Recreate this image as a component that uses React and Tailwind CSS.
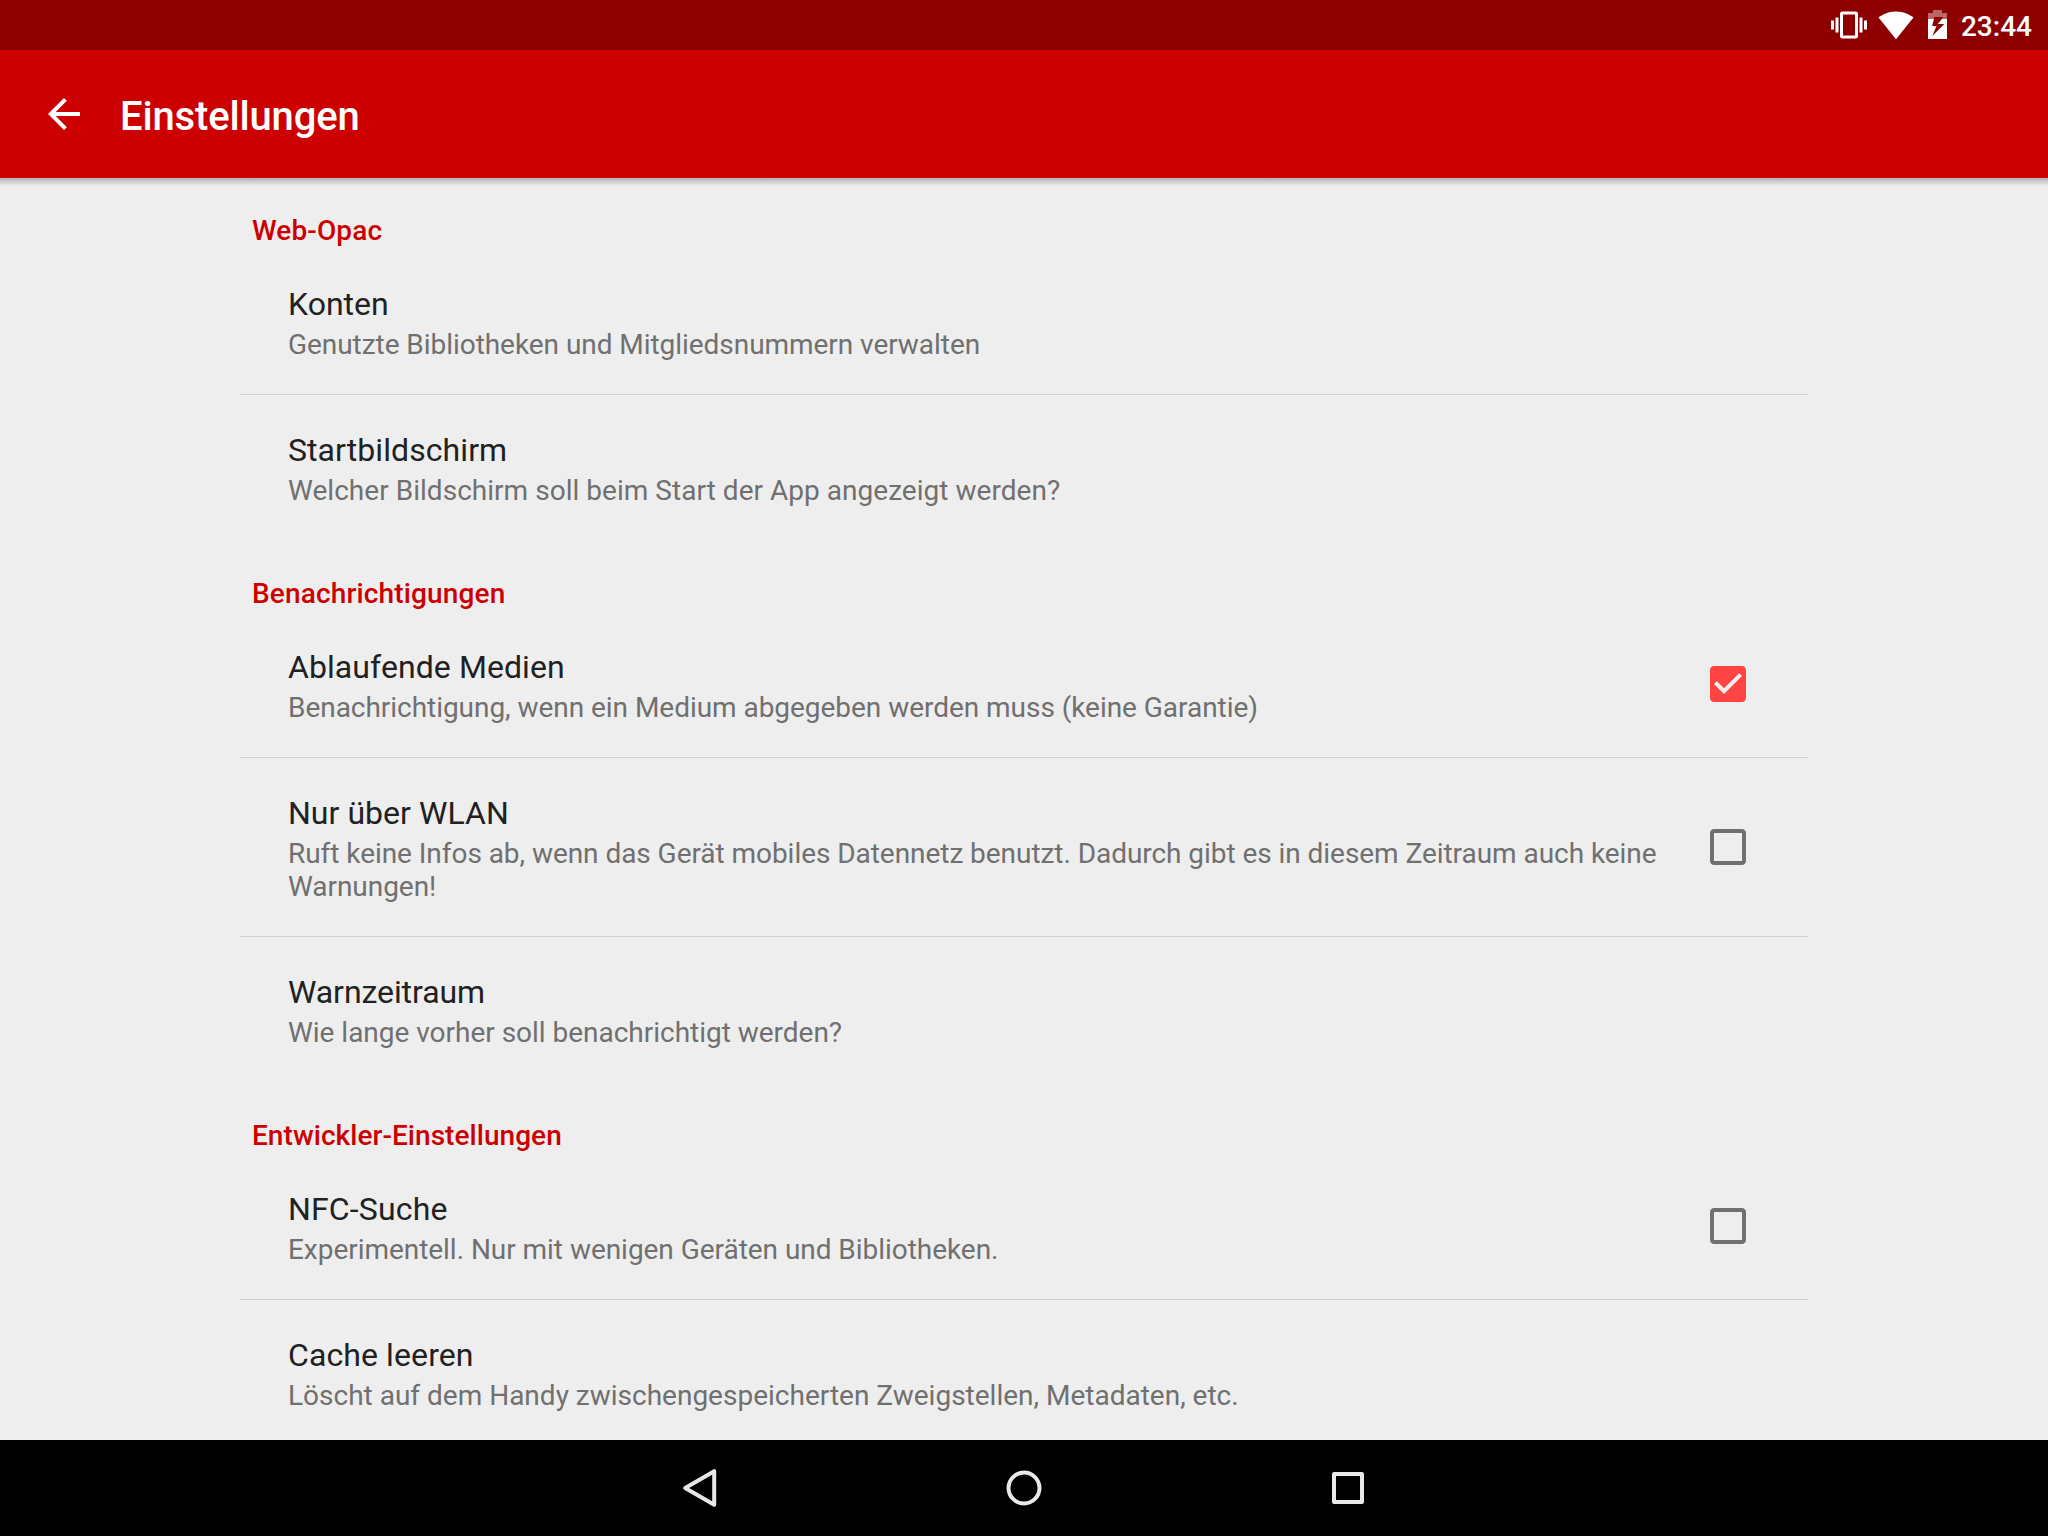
const sections = [
  {
    title: 'Web-Opac',
    tracking: 'tracking-[0.12px]',
    items: [
      {
        title: 'Konten',
        summary: 'Genutzte Bibliotheken und Mitgliedsnummern verwalten',
        summaryTracking: 'tracking-[-0.05px]',
      },
      {
        title: 'Startbildschirm',
        titleTracking: 'tracking-[0.07px]',
        summary: 'Welcher Bildschirm soll beim Start der App angezeigt werden?',
        summaryTracking: 'tracking-[0.03px]',
      },
    ],
  },
  {
    title: 'Benachrichtigungen',
    tracking: 'tracking-[0.15px]',
    items: [
      {
        title: 'Ablaufende Medien',
        titleTracking: 'tracking-[0.08px]',
        summary: 'Benachrichtigung, wenn ein Medium abgegeben werden muss (keine Garantie)',
        summaryTracking: 'tracking-[-0.04px]',
        checked: true,
      },
      {
        title: 'Nur über WLAN',
        titleTracking: 'tracking-[0.04px]',
        summary:
          'Ruft keine Infos ab, wenn das Gerät mobiles Datennetz benutzt. Dadurch gibt es in diesem Zeitraum auch keine Warnungen!',
        summaryTracking: 'tracking-[-0.05px]',
        checked: false,
      },
      {
        title: 'Warnzeitraum',
        titleTracking: 'tracking-[-0.08px]',
        summary: 'Wie lange vorher soll benachrichtigt werden?',
        summaryTracking: 'tracking-[-0.02px]',
      },
    ],
  },
  {
    title: 'Entwickler-Einstellungen',
    tracking: 'tracking-[0.05px]',
    items: [
      {
        title: 'NFC-Suche',
        titleTracking: 'tracking-[0.16px]',
        summary: 'Experimentell. Nur mit wenigen Geräten und Bibliotheken.',
        summaryTracking: 'tracking-[-0.04px]',
        checked: false,
      },
      {
        title: 'Cache leeren',
        titleTracking: 'tracking-[0.1px]',
        summary: 'Löscht auf dem Handy zwischengespeicherten Zweigstellen, Metadaten, etc.',
      },
    ],
  },
];

function StatusBar() {
  return (
    <div className="flex h-[50px] shrink-0 items-center justify-end bg-[#8e0000] pr-4 text-white">
      <svg className="size-9" viewBox="0 0 24 24" fill="currentColor">
        <path d="M0 15h2V9H0v6zm3 2h2V7H3v10zm19-8v6h2V9h-2zm-3 8h2V7h-2v10zM16.5 3h-9C6.67 3 6 3.67 6 4.5v15c0 .83.67 1.5 1.5 1.5h9c.83 0 1.5-.67 1.5-1.5v-15c0-.83-.67-1.5-1.5-1.5zM16 19H8V5h8v14z" />
      </svg>
      <svg className="ml-[11px] size-9" viewBox="0 0 24 24" fill="currentColor">
        <path d="M12.01 21.49L23.64 7c-.45-.34-4.93-4-11.64-4C5.28 3 .81 6.66.36 7l11.63 14.49.01.01.01-.01z" />
      </svg>
      <svg className="mb-px ml-3.5 h-[29px] w-[19px]" viewBox="0 0 19 29" fill="currentColor">
        <path fillOpacity="0.4" d="M5 0h9v3h5v6h-5.100L14.900 7H6.200L5.900 9H0V3h5z" />
        <path d="M0 9h5.900L4.200 16.100h4.300L4.300 26.100L16.300 14H9.700L13.900 9H19v20H0z" />
      </svg>
      <span className="mt-0.5 ml-[14px] text-[28px] leading-[33px] font-medium">23:44</span>
    </div>
  );
}

function Toolbar() {
  return (
    <header className="relative z-10 flex h-32 shrink-0 items-center bg-[#cc0000] pl-10 text-white">
      <svg className="size-12" viewBox="0 0 24 24" fill="currentColor">
        <path d="M20 11H7.83l5.59-5.59L12 4l-8 8 8 8 1.41-1.41L7.83 13H20v-2z" />
      </svg>
      <h1 className="mt-1 ml-8 text-[40px] leading-[47px] font-medium tracking-[-0.16px]">Einstellungen</h1>
      <div className="absolute inset-x-0 top-full h-2 bg-linear-to-b from-black/25 to-transparent" />
    </header>
  );
}

function Checkbox({ checked }) {
  return (
    <svg className={checked ? 'size-12 text-[#ff4444]' : 'size-12 text-[#707070]'} viewBox="0 0 24 24" fill="currentColor">
      {checked ? (
        <path d="M19 3H5c-1.11 0-2 .9-2 2v14c0 1.1.89 2 2 2h14c1.11 0 2-.9 2-2V5c0-1.1-.89-2-2-2zm-9 14l-5-5 1.41-1.41L10 14.17l7.59-7.59L19 8l-9 9z" />
      ) : (
        <path d="M19 5v14H5V5h14m0-2H5c-1.1 0-2 .9-2 2v14c0 1.1.9 2 2 2h14c1.1 0 2-.9 2-2V5c0-1.1-.9-2-2-2z" />
      )}
    </svg>
  );
}

function Preference({ item }) {
  const hasBox = item.checked !== undefined;
  return (
    <div className="flex items-center pl-12">
      <div className="w-[1376px] pt-9 pb-[33px]">
        <div className={`text-[32px] leading-[38px] text-[#212121] ${item.titleTracking ?? ''}`}>{item.title}</div>
        <div className={`mt-[5px] text-[28px] leading-[33px] text-[#707070] ${item.summaryTracking ?? ''}`}>
          {item.summary}
        </div>
      </div>
      {hasBox && (
        <div className="mb-[0.5px] ml-10">
          <Checkbox checked={item.checked} />
        </div>
      )}
    </div>
  );
}

function Section({ section }) {
  return (
    <section>
      <h2 className={`pt-9 pb-0.5 pl-3 text-[28px] leading-[33px] font-medium text-[#cc0000] ${section.tracking}`}>
        {section.title}
      </h2>
      <div className="divide-y divide-[#cfcfcf]">
        {section.items.map((item) => (
          <Preference key={item.title} item={item} />
        ))}
      </div>
    </section>
  );
}

function NavigationBar() {
  return (
    <nav className="flex h-24 shrink-0 items-center justify-center gap-[260px] bg-black text-[#e8e8e8]">
      <svg className="size-16" viewBox="0 0 64 64" fill="none" stroke="currentColor" strokeWidth="4" strokeLinejoin="round">
        <path d="M17.200 32L46.200 15.200v33.600z" />
      </svg>
      <svg className="size-16" viewBox="0 0 64 64" fill="none" stroke="currentColor" strokeWidth="4">
        <circle cx="32" cy="32" r="15.500" />
      </svg>
      <svg className="size-16" viewBox="0 0 64 64" fill="none" stroke="currentColor" strokeWidth="4" strokeLinejoin="round">
        <path d="M18 18h28v28H18z" />
      </svg>
    </nav>
  );
}

export default function App() {
  return (
    <div className="flex h-[1536px] w-[2048px] flex-col overflow-hidden bg-[#eeeeee] font-['Roboto',sans-serif]">
      <StatusBar />
      <Toolbar />
      <main className="mx-auto flex min-h-0 w-[1568px] flex-1 flex-col gap-px overflow-hidden">
        {sections.map((section) => (
          <Section key={section.title} section={section} />
        ))}
      </main>
      <NavigationBar />
    </div>
  );
}
